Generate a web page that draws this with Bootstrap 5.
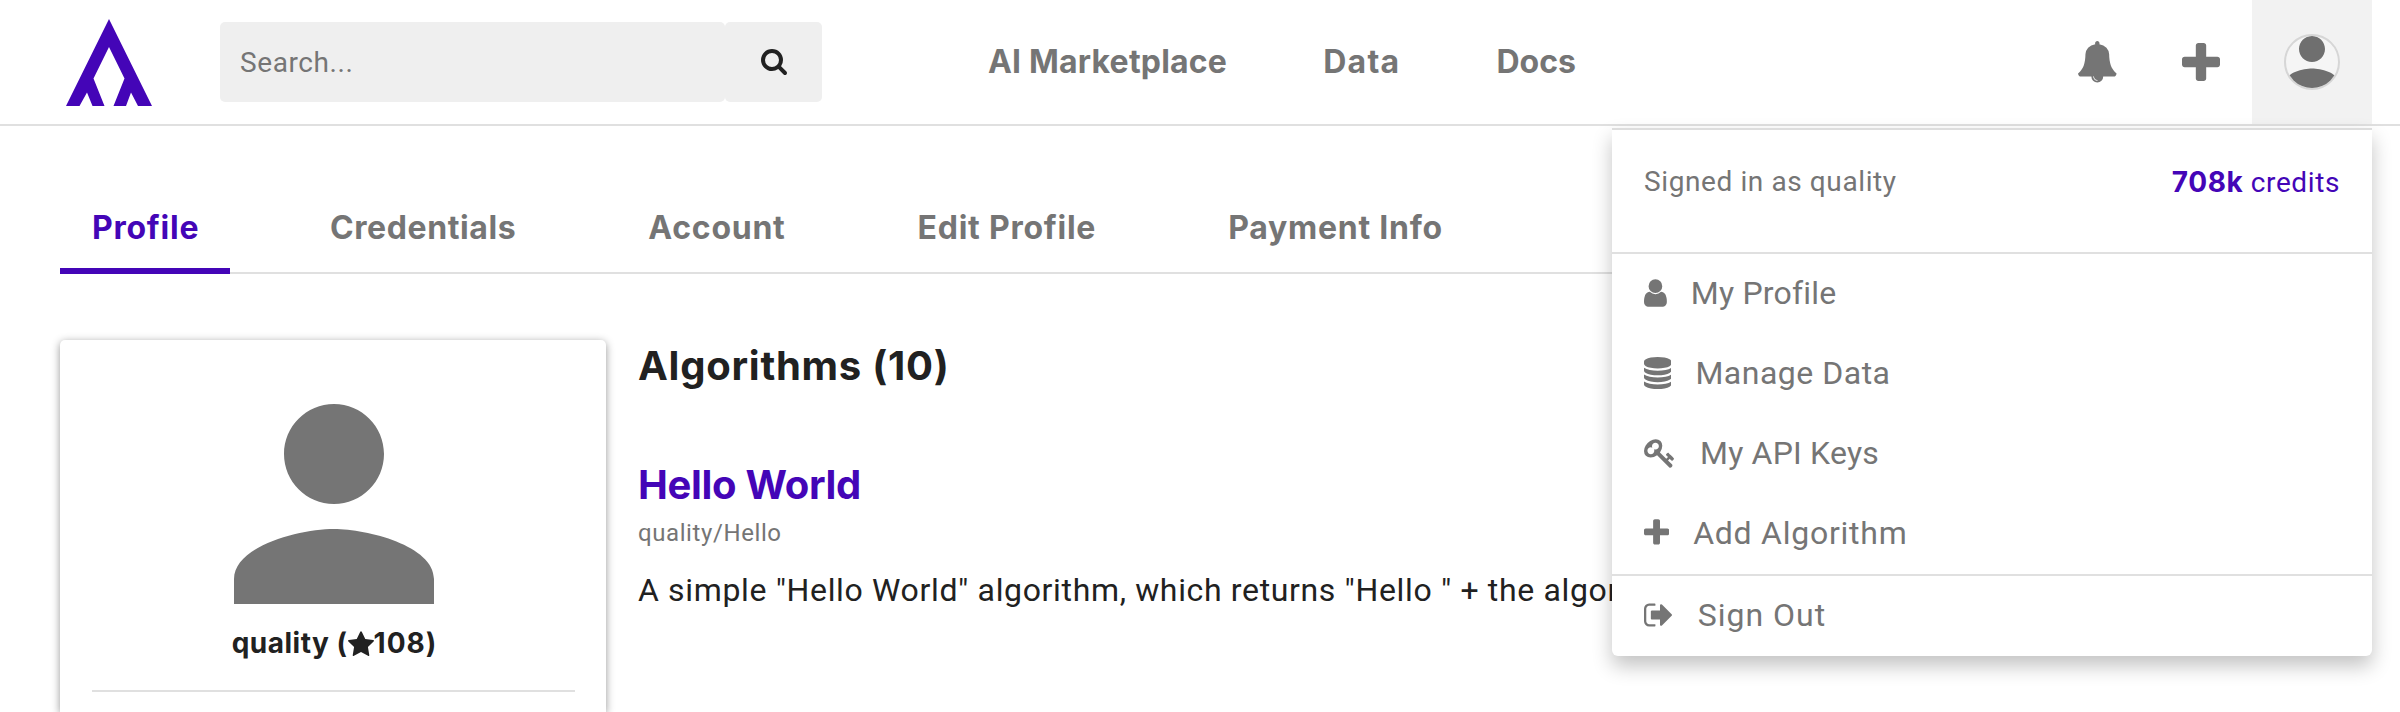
<!DOCTYPE html>
<html lang="en">
<head>
<meta charset="utf-8">
<meta name="viewport" content="width=device-width, initial-scale=1">
<title>Profile</title>
<link rel="stylesheet" href="https://cdn.jsdelivr.net/npm/bootstrap@5.3.0/dist/css/bootstrap.min.css">
<style>
  :root { --brand: #4405b7; --ink: #212121; --muted: #757575; --rule: #e0e0e0; }
  body { font-family: Roboto, sans-serif; font-size: 32px; line-height: 48px; color: var(--ink); height: 712px; overflow: hidden; background: #fff; }
  svg { fill: currentColor; display: block; flex: none; }
  strong, .heavy { font-family: Inter, sans-serif; font-weight: 700; }
  .brand-ink { color: var(--brand); }
  .muted { color: var(--muted); }

  .topbar { height: 126px; padding: 0 28px 0 66px; border-bottom: 2px solid var(--rule); position: relative; }
  .logo { padding-top: 19px; }
  .search { width: 602px; height: 80px; margin-left: 68px; }
  .search .form-control, .search .btn { background: #efefef; border: 0; border-radius: 5px; box-shadow: none; }
  .search .form-control { font-size: 28px; padding: 2px 20px 0; letter-spacing: .59px; color: var(--ink); }
  .search .form-control::placeholder { color: #757575; opacity: 1; }
  .search .btn { flex: 0 0 97px; padding: 0 0 0 36px; color: var(--ink); }
  .main-links { margin-left: 166px; gap: 96px; padding-bottom: 1px; }
  .main-links .nav-link { color: var(--muted); padding: 0; }
  .tool { width: 103px; height: 124px; color: var(--muted); }
  .tool-user { width: 120px; background: #f2f2f2; color: #6f6f6f; }
  .avatar-ring { width: 56px; height: 56px; border: 2px solid #d6d6d6; border-radius: 50%; overflow: hidden; background: #f5f5f5; }

  .account-menu { display: block; top: 128px; right: 28px; left: auto; width: 760px; padding: 0; border: 0; border-top: 2px solid #ddd; border-radius: 0 0 6px 6px; box-shadow: 0 10px 20px rgba(0,0,0,.24); color: var(--muted); font-size: 32px; }
  .account-head { height: 124px; padding: 28px 32px 0; font-size: 28px; border-bottom: 2px solid var(--rule); }
  .account-menu .dropdown-item { height: 80px; padding: 0 32px; gap: 24px; color: var(--muted); }
  .account-menu .dropdown-item svg { height: 32px; margin-top: -3px; }
  .account-menu .dropdown-item span { margin-top: -2px; }
  .account-menu .dropdown-divider { margin: 0; border-top: 2px solid var(--rule); opacity: 1; }

  .page { padding: 0 60px; }
  .tabs { margin-top: 54px; height: 94px; gap: 68px; border-bottom: 2px solid var(--rule); }
  .tabs .nav-link { height: 94px; padding: 24px 32px 0; border-bottom: 6px solid transparent; border-radius: 0; color: var(--muted); white-space: nowrap; }
  .tabs .active { width: 170px; color: var(--brand); border-color: var(--brand); }
  .content { margin-top: 66px; gap: 32px; }
  .person-card { flex: 0 0 546px; height: 372px; padding: 64px 31px 0 32px; border: 0; border-radius: 5px 5px 0 0; box-shadow: 0 2px 8px rgba(0,0,0,.42); }
  .person-name { margin-top: 19px; padding-left: 2px; font-size: 28px; line-height: 40px; }
  .person-rule { margin: 27px 0 0; border-top: 2px solid var(--rule); opacity: 1; }
  .algos { min-width: 0; padding-top: 2px; }
  .algos h2, .algos h3 { font-size: 40px; line-height: 48px; margin: 0; }
  .algos h3 { margin-top: 71px; }
  .owner { font-size: 24px; line-height: 36px; margin-top: 6px; letter-spacing: .59px; }
  .about { margin: 15px 0 0; letter-spacing: .65px; white-space: nowrap; }

  /* tracking */
  .k-0 { letter-spacing: 0; } .k-2 { letter-spacing: .2px; } .k-5 { letter-spacing: .5px; }
  .k-6 { letter-spacing: .6px; } .k-7 { letter-spacing: .75px; } .k-10 { letter-spacing: 1px; }
  .k-13 { letter-spacing: 1.3px; } .k-m3 { letter-spacing: -.32px; }
</style>
</head>
<body>
<header class="topbar d-flex align-items-center">
  <a href="#" class="logo brand-ink align-self-start" aria-label="Home">
    <svg width="86" height="87" viewBox="0 0 86 87"><path fill-rule="evenodd" d="M43 0 86 87H72L65 73.500 60 87H47.500L58.500 59.500 43 28 27.500 59.500 38.500 87H26.500L21 73.500 13.500 87H0Z"/></svg>
  </a>
  <form class="search d-flex">
    <input class="form-control flex-grow-1" type="text" placeholder="Search...">
    <button class="btn d-flex align-items-center" type="button" aria-label="Search"><svg width="26" height="26" viewBox="64 128 1664 1664"><path d="M1216 832q0-185-131.500-316.500t-316.500-131.500-316.500 131.500-131.500 316.500 131.500 316.500 316.500 131.500 316.500-131.500 131.500-316.500zm512 832q0 52-38 90t-90 38q-54 0-90-38l-343-342q-179 124-399 124-143 0-273.500-55.500t-225-150-150-225-55.500-273.500 55.500-273.500 150-225 225-150 273.500-55.500 273.500 55.500 225 150 150 225 55.500 273.500q0 220-124 399l343 343q37 37 37 90z"/></svg></button>
  </form>
  <nav class="nav main-links heavy">
    <a class="nav-link k-2" href="#">AI Marketplace</a>
    <a class="nav-link k-13" href="#">Data</a>
    <a class="nav-link k-0" href="#">Docs</a>
  </nav>
  <div class="d-flex ms-auto align-self-start">
    <div class="tool d-flex justify-content-center align-items-center"><svg width="38.600" height="41.500" viewBox="64 0 1664 1792"><path d="M912 1696q0-16-16-16-59 0-101.500-42.500t-42.500-101.500q0-16-16-16t-16 16q0 73 51.500 124.500t124.500 51.500q16 0 16-16zm816-288q0 52-38 90t-90 38h-448q0 106-75 181t-181 75-181-75-75-181h-448q-52 0-90-38t-38-90q50-42 91-88t85-119.500 74.500-158.500 50-206 19.500-260q0-152 117-282.500t307-158.500q-8-19-8-39 0-40 28-68t68-28 68 28 28 68q0 20-8 39 190 28 307 158.500t117 282.500q0 139 19.500 260t50 206 74.500 158.500 85 119.500 91 88z"/></svg></div>
    <div class="tool d-flex justify-content-center align-items-center"><svg width="38" height="38" viewBox="192 128 1408 1408"><path d="M1600 736v192q0 40-28 68t-68 28h-416v416q0 40-28 68t-68 28h-192q-40 0-68-28t-28-68v-416h-416q-40 0-68-28t-28-68v-192q0-40 28-68t68-28h416v-416q0-40 28-68t68-28h192q40 0 68 28t28 68v416h416q40 0 68 28t28 68z"/></svg></div>
    <div class="tool tool-user d-flex justify-content-center align-items-center"><div class="avatar-ring"><svg width="52" height="52" viewBox="4 4 16 16"><path d="M12 12c2.210 0 4-1.790 4-4s-1.790-4-4-4-4 1.790-4 4 1.790 4 4 4zm0 2c-2.670 0-8 1.340-8 4v2h16v-2c0-2.660-5.330-4-8-4z"/></svg></div></div>
  </div>

  <div class="dropdown-menu account-menu">
    <div class="account-head d-flex justify-content-between">
      <span class="k-6">Signed in as quality</span>
      <span class="brand-ink k-6"><strong class="k-6">708k</strong> credits</span>
    </div>
    <a class="dropdown-item d-flex align-items-center" href="#"><svg width="22.860" viewBox="256 0 1280 1792"><path d="M1536 1399q0 109-62.500 187t-150.500 78h-854q-88 0-150.500-78t-62.500-187q0-85 8.500-160.500t31.500-152 58.500-131 94-89 134.500-34.500q131 128 313 128t313-128q76 0 134.500 34.500t94 89 58.500 131 31.500 152 8.500 160.500zm-256-887q0 159-112.500 271.500t-271.500 112.500-271.500-112.500-112.500-271.500 112.500-271.500 271.500-112.500 271.500 112.500 112.500 271.500z"/></svg><span class="k-2">My Profile</span></a>
    <a class="dropdown-item d-flex align-items-center" href="#"><svg width="27.430" viewBox="128 0 1536 1792"><path d="M896 768q237 0 443-43t325-127v170q0 69-103 128t-280 93.500-385 34.500-385-34.500-280-93.500-103-128v-170q119 84 325 127t443 43zm0 768q237 0 443-43t325-127v170q0 69-103 128t-280 93.500-385 34.500-385-34.500-280-93.500-103-128v-170q119 84 325 127t443 43zm0-384q237 0 443-43t325-127v170q0 69-103 128t-280 93.500-385 34.500-385-34.500-280-93.500-103-128v-170q119 84 325 127t443 43zm0-1152q208 0 385 34.500t280 93.500 103 128v128q0 69-103 128t-280 93.500-385 34.500-385-34.500-280-93.500-103-128v-128q0-69 103-128t280-93.500 385-34.500z"/></svg><span class="k-5">Manage Data</span></a>
    <a class="dropdown-item d-flex align-items-center" href="#"><svg width="32" viewBox="0 0 1792 1792"><path d="M832 512q0-80-56-136t-136-56-136 56-56 136q0 42 19 83-41-19-83-19-80 0-136 56t-56 136 56 136 136 56 136-56 56-136q0-42-19-83 41 19 83 19 80 0 136-56t56-136zm851 704q0 17-49 66t-66 49q-9 0-28.500-16t-36.500-33-38.500-40-24.500-26l-96 96 220 220q28 28 28 68 0 42-39 81t-81 39q-40 0-68-28l-671-671q-176 131-365 131-163 0-265.500-102.500t-102.500-265.500q0-160 95-313t248-248 313-95q163 0 265.500 102.500t102.500 265.500q0 189-131 365l355 355 96-96q-3-3-26-24.500t-40-38.500-33-36.500-16-28.500q0-17 49-66t66-49q13 0 23 10 6 6 46 44.500t82 79.500 86.500 86 73 78 28.500 41z"/></svg><span class="k-2">My API Keys</span></a>
    <a class="dropdown-item d-flex align-items-center" href="#"><svg width="25.140" viewBox="192 0 1408 1792"><path d="M1600 736v192q0 40-28 68t-68 28h-416v416q0 40-28 68t-68 28h-192q-40 0-68-28t-28-68v-416h-416q-40 0-68-28t-28-68v-192q0-40 28-68t68-28h416v-416q0-40 28-68t68-28h192q40 0 68 28t28 68v416h416q40 0 68 28t28 68z"/></svg><span class="k-7">Add Algorithm</span></a>
    <hr class="dropdown-divider">
    <a class="dropdown-item d-flex align-items-center" href="#"><svg width="29.710" viewBox="64 0 1664 1792"><path d="M704 1440q0 4 1 20t.500 26.500-3 23.500-10 19.500-20.500 6.500h-320q-119 0-203.500-84.500t-84.500-203.500v-704q0-119 84.500-203.500t203.500-84.500h320q13 0 22.500 9.500t9.500 22.500q0 4 1 20t.500 26.500-3 23.500-10 19.500-20.500 6.500h-320q-66 0-113 47t-47 113v704q0 66 47 113t113 47h312l11.500 1 11.500 3 8 5.500 7 9 2 13.500zm928-544q0 26-19 45l-544 544q-19 19-45 19t-45-19-19-45v-288h-448q-26 0-45-19t-19-45v-384q0-26 19-45t45-19h448v-288q0-26 19-45t45-19 45 19l544 544q19 19 19 45z"/></svg><span class="k-10">Sign Out</span></a>
  </div>
</header>

<main class="page">
  <nav class="nav tabs heavy flex-nowrap">
    <a class="nav-link active k-7" href="#">Profile</a>
    <a class="nav-link k-6" href="#">Credentials</a>
    <a class="nav-link k-7" href="#">Account</a>
    <a class="nav-link k-7" href="#">Edit Profile</a>
    <a class="nav-link k-7" href="#">Payment Info</a>
  </nav>

  <div class="content d-flex align-items-start">
    <aside class="card person-card">
      <svg class="muted mx-auto" width="200" height="200" viewBox="4 4 16 16"><path d="M12 12c2.210 0 4-1.790 4-4s-1.790-4-4-4-4 1.790-4 4 1.790 4 4 4zm0 2c-2.670 0-8 1.340-8 4v2h16v-2c0-2.660-5.330-4-8-4z"/></svg>
      <div class="person-name heavy d-flex justify-content-center align-items-center">
        <span class="k-5">quality (</span>
        <svg width="26" height="25" viewBox="64 20 1664 1600"><path d="M1728 647q0 22-26 48l-363 354 86 500q1 7 1 20 0 21-10.500 35.500t-30.500 14.500q-19 0-40-12l-449-236-449 236q-22 12-40 12-21 0-31.500-14.500t-10.500-35.500q0-6 2-20l86-500-364-354q-25-27-25-48 0-37 56-46l502-73 225-455q19-41 49-41t49 41l225 455 502 73q56 9 56 46z"/></svg>
        <span class="k-10">108)</span>
      </div>
      <hr class="person-rule">
    </aside>
    <section class="algos">
      <h2 class="heavy k-7">Algorithms (10)</h2>
      <h3 class="heavy brand-ink k-m3">Hello World</h3>
      <div class="owner muted">quality/Hello</div>
      <p class="about">A simple "Hello World" algorithm, which returns "Hello " + the algorithm</p>
    </section>
  </div>
</main>
<script src="https://cdn.jsdelivr.net/npm/bootstrap@5.3.0/dist/js/bootstrap.bundle.min.js"></script>
</body>
</html>
